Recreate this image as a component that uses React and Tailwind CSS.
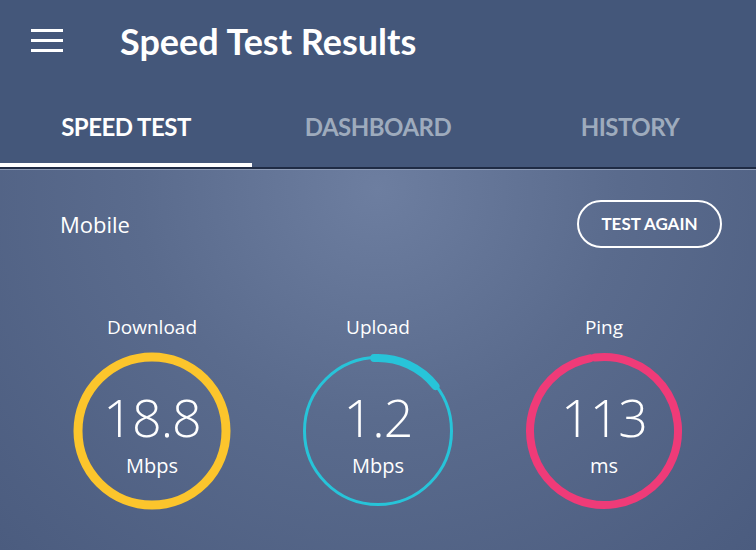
import React from "react";

const sans = { fontFamily: '"Open Sans", "Noto Sans", sans-serif' };
const lato = { fontFamily: 'Lato, "Open Sans", sans-serif' };

function Ring({ kind }) {
  if (kind === "download") {
    return (
      <svg width="160" height="160" viewBox="0 0 160 160">
        <circle cx="80" cy="80" r="74" fill="none" stroke="#fcc52c" strokeWidth="9" />
      </svg>
    );
  }
  if (kind === "upload") {
    return (
      <svg width="160" height="160" viewBox="0 0 160 160">
        <circle cx="80" cy="80" r="73.5" fill="none" stroke="#27c4d9" strokeWidth="3" />
        <path d="M76.2 7.1 A73 73 0 0 1 137.5 35.1" fill="none" stroke="#27c4d9" strokeWidth="8" strokeLinecap="round" />
      </svg>
    );
  }
  return (
    <svg width="160" height="160" viewBox="0 0 160 160">
      <path d="M70.98 6.55 A74 74 0 1 1 65.88 7.36" fill="none" stroke="#ef3b78" strokeWidth="8" strokeLinecap="round" />
      <path d="M65.88 7.36 A74 74 0 0 1 70.98 6.55" fill="none" stroke="#ef3b78" strokeWidth="5" />
    </svg>
  );
}

function Gauge({ label, value, unit, kind }) {
  return (
    <div className="flex flex-col items-center">
      <div className="text-[19px] leading-[26px] text-white mb-[11px]" style={sans}>
        {label}
      </div>
      <div className="relative w-[160px] h-[160px]">
        <Ring kind={kind} />
        <div className="absolute inset-0 flex flex-col items-center text-white" style={sans}>
          <div className="mt-[44px] text-[52px] leading-[44px] font-light tracking-[-1px]">{value}</div>
          <div className="mt-[15px] text-[20px] leading-[24px]">{unit}</div>
        </div>
      </div>
    </div>
  );
}

export default function App() {
  return (
    <div className="w-[756px] h-[550px] overflow-hidden bg-[#44577a]">
      <div className="h-[85px] flex items-center">
        <div className="ml-[31px] w-[32px] flex flex-col gap-[7px] mt-[-4px]">
          <span className="h-[3px] bg-white" />
          <span className="h-[3px] bg-white" />
          <span className="h-[3px] bg-white" />
        </div>
        <h1 className="ml-[57px] mt-[-4px] text-[36px] font-bold text-white" style={lato}>
          Speed Test Results
        </h1>
      </div>

      <div className="grid grid-cols-3 h-[82px]" style={lato}>
        <div className="flex flex-col">
          <div className="flex-1 flex items-center justify-center pt-[6px] text-[24px] font-bold text-white tracking-[-0.5px]">
            SPEED TEST
          </div>
          <div className="h-[4px] bg-white" />
        </div>
        <div className="flex items-center justify-center pt-[2px] text-[24px] font-bold text-[#9eabbd] tracking-[-0.5px]">
          DASHBOARD
        </div>
        <div className="flex items-center justify-center pt-[2px] text-[24px] font-bold text-[#9eabbd] tracking-[-0.5px]">
          HISTORY
        </div>
      </div>
      <div className="h-[2px] bg-[#1f2b44]" />
      <div className="h-[1px] bg-[#8d9bb5]" />

      <div className="h-[380px] bg-[radial-gradient(ellipse_at_50%_5%,#6d7ea0_0%,#5a6b8d_45%,#4b5c7f_100%)]">
        <div className="flex items-center justify-between pl-[60px] pr-[34px] pt-[30px]">
          <div className="text-[22px] text-white" style={sans}>Mobile</div>
          <button
            className="w-[145px] h-[48px] rounded-full border-2 border-white text-white text-[17px] font-bold"
            style={lato}
          >
            TEST AGAIN
          </button>
        </div>

        <div className="grid grid-cols-3 px-[39px] mt-[66px]">
          <Gauge label="Download" value="18.8" unit="Mbps" kind="download" />
          <Gauge label="Upload" value="1.2" unit="Mbps" kind="upload" />
          <Gauge label="Ping" value="113" unit="ms" kind="ping" />
        </div>
      </div>
    </div>
  );
}
